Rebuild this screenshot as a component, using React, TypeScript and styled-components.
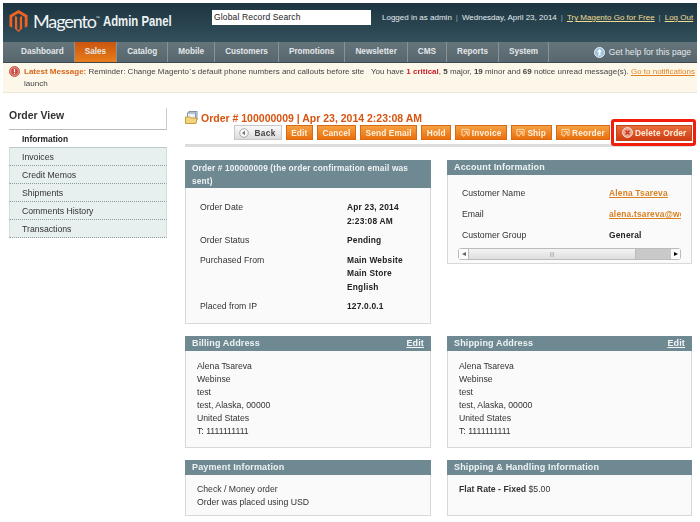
import React from "react";
import styled, { createGlobalStyle } from "styled-components";

const GlobalStyle = createGlobalStyle`
  html, body {
    margin: 0;
    padding: 0;
    background: #fff;
  }
  body {
    font-family: "Liberation Sans", Arial, sans-serif;
    font-size: 9px;
    color: #2f2f2f;
  }
`;

const tabs = [
  "Dashboard",
  "Sales",
  "Catalog",
  "Mobile",
  "Customers",
  "Promotions",
  "Newsletter",
  "CMS",
  "Reports",
  "System",
];

const sideItems = ["Invoices", "Credit Memos", "Shipments", "Comments History", "Transactions"];

function Logo() {
  return (
    <svg width="19" height="22" viewBox="0 0 20 23">
      <path d="M10 0 L19.5 5.5 V17 L16.6 18.7 V7.2 L10 3.4 L3.4 7.2 V18.7 L0.5 17 V5.5 Z" fill="#f26322" />
      <path d="M8.6 7.4 V20.2 L10 21 L11.4 20.2 V7.4 L13.8 6.2 V19.6 L10 23 L6.2 19.6 V6.2 Z" fill="#f26322" />
    </svg>
  );
}

function NoticeIcon() {
  return (
    <svg width="11" height="11" viewBox="0 0 11 11">
      <circle cx="5.5" cy="5.5" r="5" fill="#e58a80" stroke="#c65a4e" />
      <circle cx="5.5" cy="5.5" r="3.2" fill="#c9483c" />
      <rect x="4.9" y="3" width="1.2" height="3.2" fill="#fff" />
      <rect x="4.9" y="6.8" width="1.2" height="1.2" fill="#fff" />
    </svg>
  );
}

function HelpIcon() {
  return (
    <svg width="11" height="11" viewBox="0 0 11 11">
      <circle cx="5.5" cy="5.5" r="5" fill="#9cc3dc" stroke="#e6f0f5" />
      <path d="M5.5 2 L8 5 H6.5 V8.5 H4.5 V5 H3 Z" fill="#fff" />
    </svg>
  );
}

function TitleIcon() {
  return (
    <svg width="13" height="13" viewBox="0 0 13 13">
      <rect x="4" y="0.5" width="8" height="8" fill="#dfe6ee" stroke="#8494a8" />
      <rect x="2.5" y="2" width="8" height="7" fill="#eef2f6" stroke="#8494a8" />
      <path d="M0.5 6 H5 L6 7 H12 L11 12.5 H0.5 Z" fill="#f3d67c" stroke="#c99a3c" />
    </svg>
  );
}

function BackIcon() {
  return (
    <svg width="10" height="10" viewBox="0 0 10 10">
      <circle cx="5" cy="5" r="4.3" fill="#fafafa" stroke="#aaa" />
      <path d="M6 2.8 V7.2 L3 5 Z" fill="#777" />
    </svg>
  );
}

function ActionIcon() {
  return (
    <svg width="9" height="10" viewBox="0 0 10 10" fill="none" stroke="#ffe3bd" strokeWidth="1">
      <path d="M3 7.5 H1 V1 H9 V7.5 H7" />
      <path d="M3 3.5 H7 V7 M6.6 3.8 L2.8 9.2" />
    </svg>
  );
}

function DeleteIcon() {
  return (
    <svg width="11" height="11" viewBox="0 0 11 11">
      <circle cx="5.5" cy="5.5" r="5" fill="#e8a48e" stroke="#f6d8cc" />
      <path d="M3.5 3.5 L7.5 7.5 M7.5 3.5 L3.5 7.5" stroke="#c8381c" strokeWidth="1.6" />
    </svg>
  );
}

export default function App() {
  return (
    <>
      <GlobalStyle />
      <Page>
        <Header>
          <Brand>
            <Logo />
            <BrandName>
              Magento<sup>™</sup>
            </BrandName>
            <BrandSub>Admin Panel</BrandSub>
          </Brand>
          <Search>Global Record Search</Search>
          <UserLinks>
            Logged in as admin<Sep>|</Sep>Wednesday, April 23, 2014<Sep>|</Sep>
            <TopLink>Try Magento Go for Free</TopLink>
            <Sep>|</Sep>
            <TopLink>Log Out</TopLink>
          </UserLinks>
        </Header>
        <Nav>
          {tabs.map((tab, i) => (
            <Tab key={tab} $active={tab === "Sales"} $first={i === 0}>
              {tab}
            </Tab>
          ))}
          <Help>
            <HelpIcon />
            Get help for this page
          </Help>
        </Nav>
        <Notice>
          <NoticeIconWrap>
            <NoticeIcon />
          </NoticeIconWrap>
          <NoticeLeft>
            <Latest>Latest Message:</Latest> Reminder: Change Magento`s default phone numbers and callouts before site launch
          </NoticeLeft>
          <NoticeRight>
            You have <Critical>1 critical</Critical>, <b>5</b> major, <b>19</b> minor and <b>69</b> notice unread
            message(s). <OrangeLink>Go to notifications</OrangeLink>
          </NoticeRight>
        </Notice>
        <Body>
          <Sidebar>
            <SideTitle>Order View</SideTitle>
            <SideActive>Information</SideActive>
            {sideItems.map((item) => (
              <SideItem key={item}>{item}</SideItem>
            ))}
          </Sidebar>
          <Main>
            <TitleBar>
              <TitleRow>
                <TitleIcon />
                <Title>Order # 100000009 | Apr 23, 2014 2:23:08 AM</Title>
              </TitleRow>
              <Actions>
                <BackButton>
                  <BackIcon />
                  Back
                </BackButton>
                <Button>Edit</Button>
                <Button>Cancel</Button>
                <Button>Send Email</Button>
                <Button>Hold</Button>
                <Button>
                  <ActionIcon />
                  Invoice
                </Button>
                <Button>
                  <ActionIcon />
                  Ship
                </Button>
                <Button>
                  <ActionIcon />
                  Reorder
                </Button>
                <Highlight>
                  <DeleteButton>
                    <DeleteIcon />
                    Delete Order
                  </DeleteButton>
                </Highlight>
              </Actions>
            </TitleBar>
            <Panels>
              <Panel>
                <PanelHead $tall>Order # 100000009 (the order confirmation email was sent)</PanelHead>
                <OrderBody>
                  <Label>Order Date</Label>
                  <Value>
                    Apr 23, 2014
                    <br />
                    2:23:08 AM
                  </Value>
                  <Label>Order Status</Label>
                  <Value>Pending</Value>
                  <Label>Purchased From</Label>
                  <Value>
                    Main Website
                    <br />
                    Main Store
                    <br />
                    English
                  </Value>
                  <Label>Placed from IP</Label>
                  <Value>127.0.0.1</Value>
                </OrderBody>
              </Panel>
              <AccountPanel>
                <PanelHead>Account Information</PanelHead>
                <AccountBody>
                  <AccountGrid>
                    <Label>Customer Name</Label>
                    <OrangeValue>Alena Tsareva</OrangeValue>
                    <Label>Email</Label>
                    <OrangeValue>alena.tsareva@webinse.com</OrangeValue>
                    <Label>Customer Group</Label>
                    <Value>General</Value>
                  </AccountGrid>
                  <Scrollbar>
                    <ScrollEnd>◂</ScrollEnd>
                    <ScrollThumb>|||</ScrollThumb>
                    <ScrollTrack />
                    <ScrollEnd $dark>▸</ScrollEnd>
                  </Scrollbar>
                </AccountBody>
              </AccountPanel>
              <Panel>
                <PanelHead>
                  Billing Address<EditLink>Edit</EditLink>
                </PanelHead>
                <AddressBody>
                  Alena Tsareva
                  <br />
                  Webinse
                  <br />
                  test
                  <br />
                  test, Alaska, 00000
                  <br />
                  United States
                  <br />
                  T: 1111111111
                </AddressBody>
              </Panel>
              <Panel>
                <PanelHead>
                  Shipping Address<EditLink>Edit</EditLink>
                </PanelHead>
                <AddressBody>
                  Alena Tsareva
                  <br />
                  Webinse
                  <br />
                  test
                  <br />
                  test, Alaska, 00000
                  <br />
                  United States
                  <br />
                  T: 1111111111
                </AddressBody>
              </Panel>
              <Panel>
                <PanelHead>Payment Information</PanelHead>
                <ShortBody>
                  Check / Money order
                  <br />
                  Order was placed using USD
                </ShortBody>
              </Panel>
              <Panel>
                <PanelHead>Shipping &amp; Handling Information</PanelHead>
                <ShortBody>
                  <b>Flat Rate - Fixed</b> $5.00
                </ShortBody>
              </Panel>
            </Panels>
          </Main>
        </Body>
      </Page>
    </>
  );
}

const Page = styled.div`
  width: 700px;
  height: 522px;
  overflow: hidden;
  padding-top: 3px;
  box-sizing: border-box;
  filter: blur(0.3px);
`;

const Header = styled.div`
  margin: 0 3px;
  height: 39px;
  background: linear-gradient(#1c3540, #33505c);
  display: flex;
  align-items: flex-start;
  color: #e8eef0;
`;

const Brand = styled.div`
  display: flex;
  align-items: center;
  margin: 7px 0 0 6px;
  width: 203px;
`;

const BrandName = styled.span`
  font-family: "Lato", "Liberation Sans", sans-serif;
  font-size: 18px;
  color: #f2f5f6;
  margin-left: 5px;
  letter-spacing: -1.1px;

  sup {
    font-size: 5px;
    vertical-align: 8px;
    line-height: 0;
  }
`;

const BrandSub = styled.span`
  display: inline-block;
  font-weight: bold;
  font-size: 14px;
  color: #eef2f3;
  margin-left: 4px;
  white-space: nowrap;
  transform: scaleX(0.81);
  transform-origin: left center;
`;

const Search = styled.div`
  width: 157px;
  height: 15px;
  margin-top: 7px;
  padding-left: 2px;
  background: #fff;
  color: #222;
  font-size: 8.5px;
  line-height: 15px;
  letter-spacing: 0.15px;
`;

const UserLinks = styled.div`
  margin: 9px 0 0 11px;
  font-size: 8px;
  line-height: 11px;
  white-space: nowrap;
  color: #e4ebee;
`;

const Sep = styled.span`
  margin: 0 4px;
  color: #8aa0a8;
`;

const TopLink = styled.span`
  color: #f0dc92;
  text-decoration: underline;
`;

const Nav = styled.div`
  margin: 0 3px;
  height: 21px;
  background: linear-gradient(#66747c, #58666e);
  border-bottom: 1px solid #3c4a50;
  box-sizing: border-box;
  display: flex;
`;

const Tab = styled.div<{ $active?: boolean; $first?: boolean }>`
  padding: 0 10px 0 ${(p) => (p.$first ? "18px" : "10px")};
  line-height: 20px;
  font-size: 8.2px;
  font-weight: bold;
  color: #e3e8ea;
  border-right: 1px solid #87939a;
  background: ${(p) => (p.$active ? "linear-gradient(#c9550f, #ea7d1a)" : "transparent")};
`;

const Help = styled.div`
  margin-left: auto;
  padding-right: 6px;
  display: flex;
  align-items: center;
  gap: 4px;
  font-size: 8.6px;
  color: #e3e8ea;
`;

const Notice = styled.div`
  margin: 0 3px;
  height: 30px;
  box-sizing: border-box;
  background: #fdf7ea;
  border-bottom: 1px solid #ece8dc;
  display: flex;
  padding: 3px 0 0 6px;
  font-size: 8px;
  line-height: 12px;
  color: #444;
`;

const NoticeIconWrap = styled.div`
  width: 15px;
  flex: none;
`;

const NoticeLeft = styled.div`
  width: 345px;
  flex: none;
`;

const Latest = styled.b`
  color: #d8661c;
`;

const NoticeRight = styled.div`
  margin-left: 2px;
  white-space: nowrap;
  flex: none;
`;

const Critical = styled.b`
  color: #c4202c;
`;

const OrangeLink = styled.span`
  color: #e0831f;
  text-decoration: underline;
`;

const Body = styled.div`
  display: flex;
  padding: 15px 0 0 9px;
`;

const Sidebar = styled.div`
  width: 158px;
  flex: none;
  margin-right: 18px;
`;

const SideTitle = styled.div`
  height: 22px;
  box-sizing: border-box;
  border-right: 1px solid #ccc;
  border-bottom: 1px solid #bbb;
  font-size: 10.5px;
  font-weight: bold;
  line-height: 15px;
  color: #333;
`;

const SideActive = styled.div`
  height: 18px;
  padding-left: 13px;
  font-size: 8.4px;
  font-weight: bold;
  line-height: 18px;
  color: #222;
  border-bottom: 1px solid #b9c9cc;
  box-sizing: border-box;
`;

const SideItem = styled.div`
  height: 18px;
  box-sizing: border-box;
  padding-left: 12px;
  font-size: 8.7px;
  line-height: 18px;
  color: #333;
  background: #e7efef;
  border-left: 1px solid #d2dcdc;
  border-right: 1px solid #d2dcdc;
  border-bottom: 1px dotted #8a9a9e;
`;

const Main = styled.div`
  width: 507px;
  flex: none;
`;

const TitleBar = styled.div`
  height: 39px;
  box-sizing: border-box;
  border-bottom: 3px solid #ddd;
  margin-bottom: 13px;
`;

const TitleRow = styled.div`
  display: flex;
  align-items: center;
  gap: 3px;
  height: 15px;
  padding-top: 2px;
  box-sizing: content-box;
`;

const Title = styled.div`
  color: #d8540f;
  font-size: 10.5px;
  font-weight: bold;
  white-space: nowrap;
`;

const Actions = styled.div`
  display: flex;
  justify-content: flex-end;
  align-items: center;
  gap: 4px;
  height: 15px;
`;

const Button = styled.div`
  height: 15px;
  box-sizing: border-box;
  padding: 0 4.5px;
  display: flex;
  align-items: center;
  gap: 2px;
  background: linear-gradient(#f5a144, #ea6f0c);
  border: 1px solid #d76a12;
  color: #fdf0dd;
  font-size: 8.3px;
  font-weight: bold;
  letter-spacing: 0.15px;
  white-space: nowrap;
`;

const BackButton = styled(Button)`
  background: linear-gradient(#fafafa, #dcdcdc);
  border-color: #c8c8c8;
  color: #444;
  padding: 0 5px 0 4px;
  gap: 6px;
  letter-spacing: 0.3px;
`;

const Highlight = styled.div`
  flex: none;
  margin: 0 -4px 0 -3px;
  border: 3px solid #f21d0c;
  border-radius: 3px;
  padding: 0 1px 0 2px;
  height: 27px;
  box-sizing: border-box;
  display: flex;
  align-items: center;
`;

const DeleteButton = styled(Button)`
  background: linear-gradient(#e76f3c, #cf3d13);
  border-color: #c4451d;
  height: 16px;
`;

const Panels = styled.div`
  display: grid;
  grid-template-columns: 246px 245px;
  grid-template-rows: 164px 112px 56px;
  column-gap: 16px;
  row-gap: 12px;
`;

const Panel = styled.div`
  display: flex;
  flex-direction: column;
  min-width: 0;
`;

const AccountPanel = styled(Panel)`
  height: 104px;
`;

const PanelHead = styled.div<{ $tall?: boolean }>`
  flex: none;
  min-height: 15px;
  box-sizing: border-box;
  padding: 0 7px;
  background: #6f8992;
  color: #eef3f4;
  font-size: ${(p) => (p.$tall ? "8.3px" : "9px")};
  font-weight: bold;
  letter-spacing: 0.15px;
  line-height: ${(p) => (p.$tall ? "13px" : "15px")};
  padding-top: ${(p) => (p.$tall ? "2px" : "0")};
  height: ${(p) => (p.$tall ? "28px" : "15px")};
  display: ${(p) => (p.$tall ? "block" : "flex")};
  justify-content: space-between;
`;

const EditLink = styled.span`
  text-decoration: underline;
  color: #f2f6f7;
`;

const panelBody = `
  flex: 1;
  box-sizing: border-box;
  background: #fafafa;
  border: 1px solid #d8d8d8;
  border-top: 0;
  font-size: 8.7px;
  color: #333;
`;

const OrderBody = styled.div`
  ${panelBody}
  display: grid;
  grid-template-columns: 147px 1fr;
  grid-auto-rows: min-content;
  padding: 13px 0 0 14px;
  row-gap: 6px;
`;

const Label = styled.div`
  white-space: nowrap;
  line-height: 13px;
`;

const Value = styled.div`
  font-weight: bold;
  font-size: 8.4px;
  letter-spacing: 0.2px;
  white-space: nowrap;
  line-height: 13.5px;
  color: #222;
`;

const OrangeValue = styled(Value)`
  color: #d9811f;
  text-decoration: underline;
`;

const AccountBody = styled.div`
  ${panelBody}
  padding: 12px 10px 0 10px;
  display: flex;
  flex-direction: column;
`;

const AccountGrid = styled.div`
  display: grid;
  grid-template-columns: 147px 1fr;
  grid-auto-rows: 14px;
  align-content: start;
  padding-left: 4px;
  row-gap: 7px;
  overflow: hidden;
  height: 61px;
  flex: none;
`;

const Scrollbar = styled.div`
  height: 12px;
  display: flex;
  border: 1px solid #bbb;
  border-radius: 3px;
  box-sizing: border-box;
  background: #e6e6e6;
`;

const ScrollEnd = styled.div<{ $dark?: boolean }>`
  width: 9px;
  flex: none;
  text-align: center;
  font-size: 8px;
  line-height: 10px;
  color: ${(p) => (p.$dark ? "#000" : "#666")};
  background: #fbfbfb;
`;

const ScrollThumb = styled.div`
  width: 166px;
  flex: none;
  text-align: center;
  font-size: 6px;
  line-height: 10px;
  color: #999;
  background: linear-gradient(#f4f4f4, #dedede);
  border-left: 1px solid #bbb;
  border-right: 1px solid #bbb;
`;

const ScrollTrack = styled.div`
  flex: 1;
  background: #c9c9c9;
`;

const AddressBody = styled.div`
  ${panelBody}
  padding: 9px 0 0 11px;
  line-height: 13px;
`;

const ShortBody = styled.div`
  ${panelBody}
  padding: 8px 0 0 11px;
  line-height: 13px;
`;
